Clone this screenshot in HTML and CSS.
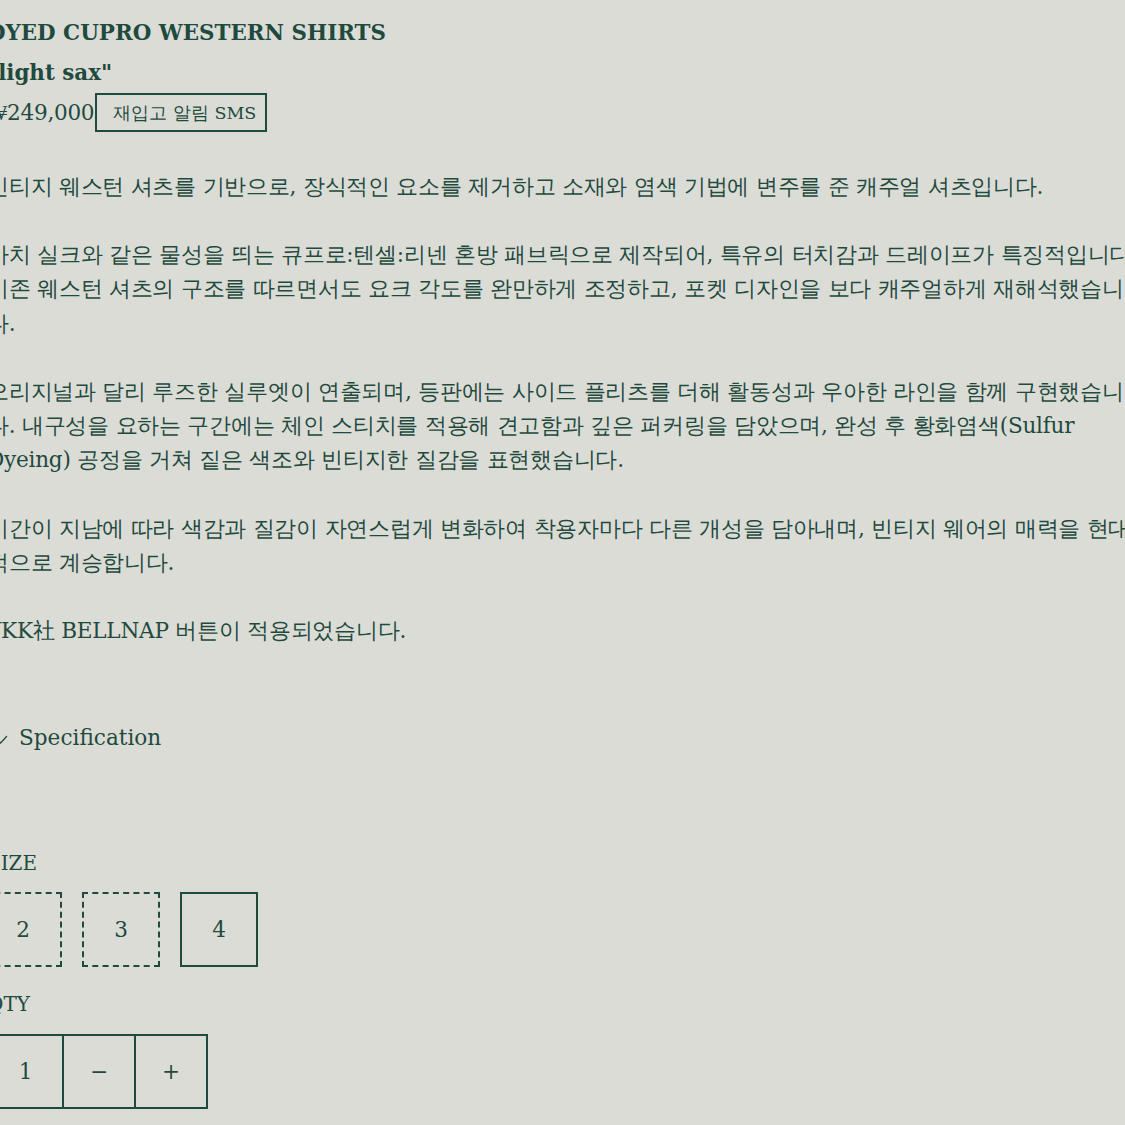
FILE: index.html
```html
<!DOCTYPE html>
<html lang="ko">
<head>
<meta charset="utf-8">
<title>DYED CUPRO WESTERN SHIRTS</title>
<link rel="stylesheet" href="styles.css">
</head>
<body>
<div class="viewport">
<main class="product">
  <header class="product-head">
    <h1 class="title">DYED CUPRO WESTERN SHIRTS<br>"light sax"</h1>
    <div class="price-row">
      <span class="price">₩249,000</span>
      <button class="restock" type="button">재입고 알림 SMS</button>
    </div>
  </header>

  <section class="desc">
    <p>빈티지 웨스턴 셔츠를 기반으로, 장식적인 요소를 제거하고 소재와 염색 기법에 변주를 준 캐주얼 셔츠입니다.</p>
    <p>마치 실크와 같은 물성을 띄는 큐프로:텐셀:리넨 혼방 패브릭으로 제작되어, 특유의 터치감과 드레이프가 특징적입니다. 기존 웨스턴 셔츠의 구조를 따르면서도 요크 각도를 완만하게 조정하고, 포켓 디자인을 보다 캐주얼하게 재해석했습니다.</p>
    <p>오리지널과 달리 루즈한 실루엣이 연출되며, 등판에는 사이드 플리츠를 더해 활동성과 우아한 라인을 함께 구현했습니다. 내구성을 요하는 구간에는 체인 스티치를 적용해 견고함과 깊은 퍼커링을 담았으며, 완성 후 황화염색(Sulfur Dyeing) 공정을 거쳐 짙은 색조와 빈티지한 질감을 표현했습니다.</p>
    <p>시간이 지남에 따라 색감과 질감이 자연스럽게 변화하여 착용자마다 다른 개성을 담아내며, 빈티지 웨어의 매력을 현대적으로 계승합니다.</p>
    <p>YKK社 BELLNAP 버튼이 적용되었습니다.</p>
  </section>

  <div class="spec">
    <svg class="check" width="11" height="9" viewBox="0 0 11 9" aria-hidden="true"><path d="M1 5.2 L3.6 8 L10 1" fill="none" stroke="currentColor" stroke-width="1.2"/></svg>
    <span>Specification</span>
  </div>

  <div class="option option-size">
    <div class="label">SIZE</div>
    <div class="sizes">
      <span class="size soldout">2</span>
      <span class="size soldout">3</span>
      <span class="size">4</span>
    </div>
  </div>

  <div class="option option-qty">
    <div class="label">QTY</div>
    <div class="qty">
      <span class="qty-cell qty-num">1</span>
      <span class="qty-cell">−</span>
      <span class="qty-cell">+</span>
    </div>
  </div>
</main>
</div>
</body>
</html>
```

FILE: styles.css
```css
html, body {
  margin: 0;
  padding: 0;
  background: #dcdcd7;
}

body {
  font-family: "DejaVu Serif", serif;
  color: #1f4a3e;
  font-size: 21.6px;
}

.viewport {
  width: 1125px;
  height: 1125px;
  overflow: hidden;
}

.product {
  margin-left: -13px;
  width: 1161px;
}

.product-head {
  padding-top: 13px;
}

.title {
  margin: 0;
  font-size: 21.4px;
  font-weight: bold;
  line-height: 40px;
}

.price-row {
  display: flex;
  align-items: center;
  gap: 0;
  height: 39px;
}

.price {
  line-height: 39px;
  white-space: nowrap;
  letter-spacing: -0.3px;
}

.restock {
  font-family: "DejaVu Serif", serif;
  font-size: 17.5px;
  color: #1f4a3e;
  background: transparent;
  border: 2px solid #1f4a3e;
  height: 39px;
  padding: 0 9px 0 16px;
  margin: 0 0 0 1px;
  border-radius: 0;
}

.desc {
  margin-top: 37.9px;
  letter-spacing: -0.25px;
}

.desc p {
  margin: 0 0 34.2px;
  line-height: 34.2px;
}

.spec {
  margin-top: 72.8px;
  display: flex;
  align-items: center;
  line-height: 34.2px;
  height: 34.2px;
}

.check {
  margin-left: 10px;
  margin-right: 11px;
  margin-top: 2px;
}

.option .label {
  font-size: 20px;
  line-height: 34.2px;
}

.option-size {
  margin-top: 90.8px;
}

.option-size .label {
  margin-bottom: 10.9px;
}

.sizes {
  display: flex;
  gap: 20px;
  margin-left: -3px;
}

.size {
  box-sizing: border-box;
  width: 78px;
  height: 75px;
  border: 2px solid #1f4a3e;
  display: flex;
  align-items: center;
  justify-content: center;
}

.size.soldout {
  border-style: dashed;
}

.option-qty {
  margin-top: 20.9px;
}

.option-qty .label {
  margin-bottom: 11.9px;
}

.qty {
  display: flex;
}

.qty-cell {
  box-sizing: border-box;
  width: 74px;
  height: 75px;
  border: 2px solid #1f4a3e;
  margin-left: -2px;
  display: flex;
  align-items: center;
  justify-content: center;
}

.qty-cell.qty-num {
  margin-left: 0;
  width: 77px;
}
```
